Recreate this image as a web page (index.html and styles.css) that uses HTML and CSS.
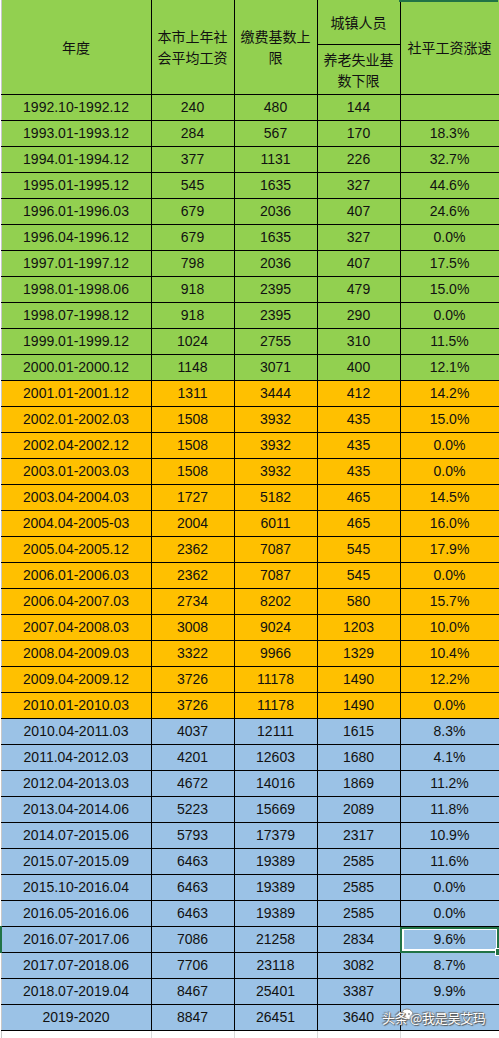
FILE: index.html
```html
<!DOCTYPE html>
<html lang="zh">
<head>
    <meta charset="UTF-8">
    <meta name="viewport" content="width=device-width, initial-scale=1.0">
    <title>社平工资与缴费基数</title>
    <link rel="stylesheet" href="styles.css">
</head>
<body>
    <div class="sheet">
        <div class="col-mark"></div>
        <table class="grid">
            <colgroup>
                <col class="c1"><col class="c2"><col class="c3"><col class="c4"><col class="c5">
            </colgroup>
            <thead>
                <tr class="h1">
                    <th rowspan="2">年度</th>
                    <th rowspan="2">本市上年社<br>会平均工资</th>
                    <th rowspan="2">缴费基数上<br>限</th>
                    <th>城镇人员</th>
                    <th rowspan="2">社平工资涨速</th>
                </tr>
                <tr class="h2">
                    <th>养老失业基<br>数下限</th>
                </tr>
            </thead>
            <tbody>
                <tr class="g"><td>1992.10-1992.12</td><td>240</td><td>480</td><td>144</td><td></td></tr>
                <tr class="g"><td>1993.01-1993.12</td><td>284</td><td>567</td><td>170</td><td>18.3%</td></tr>
                <tr class="g"><td>1994.01-1994.12</td><td>377</td><td>1131</td><td>226</td><td>32.7%</td></tr>
                <tr class="g"><td>1995.01-1995.12</td><td>545</td><td>1635</td><td>327</td><td>44.6%</td></tr>
                <tr class="g"><td>1996.01-1996.03</td><td>679</td><td>2036</td><td>407</td><td>24.6%</td></tr>
                <tr class="g"><td>1996.04-1996.12</td><td>679</td><td>1635</td><td>327</td><td>0.0%</td></tr>
                <tr class="g"><td>1997.01-1997.12</td><td>798</td><td>2036</td><td>407</td><td>17.5%</td></tr>
                <tr class="g"><td>1998.01-1998.06</td><td>918</td><td>2395</td><td>479</td><td>15.0%</td></tr>
                <tr class="g"><td>1998.07-1998.12</td><td>918</td><td>2395</td><td>290</td><td>0.0%</td></tr>
                <tr class="g"><td>1999.01-1999.12</td><td>1024</td><td>2755</td><td>310</td><td>11.5%</td></tr>
                <tr class="g"><td>2000.01-2000.12</td><td>1148</td><td>3071</td><td>400</td><td>12.1%</td></tr>
                <tr class="o"><td>2001.01-2001.12</td><td>1311</td><td>3444</td><td>412</td><td>14.2%</td></tr>
                <tr class="o"><td>2002.01-2002.03</td><td>1508</td><td>3932</td><td>435</td><td>15.0%</td></tr>
                <tr class="o"><td>2002.04-2002.12</td><td>1508</td><td>3932</td><td>435</td><td>0.0%</td></tr>
                <tr class="o"><td>2003.01-2003.03</td><td>1508</td><td>3932</td><td>435</td><td>0.0%</td></tr>
                <tr class="o"><td>2003.04-2004.03</td><td>1727</td><td>5182</td><td>465</td><td>14.5%</td></tr>
                <tr class="o"><td>2004.04-2005-03</td><td>2004</td><td>6011</td><td>465</td><td>16.0%</td></tr>
                <tr class="o"><td>2005.04-2005.12</td><td>2362</td><td>7087</td><td>545</td><td>17.9%</td></tr>
                <tr class="o"><td>2006.01-2006.03</td><td>2362</td><td>7087</td><td>545</td><td>0.0%</td></tr>
                <tr class="o"><td>2006.04-2007.03</td><td>2734</td><td>8202</td><td>580</td><td>15.7%</td></tr>
                <tr class="o"><td>2007.04-2008.03</td><td>3008</td><td>9024</td><td>1203</td><td>10.0%</td></tr>
                <tr class="o"><td>2008.04-2009.03</td><td>3322</td><td>9966</td><td>1329</td><td>10.4%</td></tr>
                <tr class="o"><td>2009.04-2009.12</td><td>3726</td><td>11178</td><td>1490</td><td>12.2%</td></tr>
                <tr class="o"><td>2010.01-2010.03</td><td>3726</td><td>11178</td><td>1490</td><td>0.0%</td></tr>
                <tr class="b"><td>2010.04-2011.03</td><td>4037</td><td>12111</td><td>1615</td><td>8.3%</td></tr>
                <tr class="b"><td>2011.04-2012.03</td><td>4201</td><td>12603</td><td>1680</td><td>4.1%</td></tr>
                <tr class="b"><td>2012.04-2013.03</td><td>4672</td><td>14016</td><td>1869</td><td>11.2%</td></tr>
                <tr class="b"><td>2013.04-2014.06</td><td>5223</td><td>15669</td><td>2089</td><td>11.8%</td></tr>
                <tr class="b"><td>2014.07-2015.06</td><td>5793</td><td>17379</td><td>2317</td><td>10.9%</td></tr>
                <tr class="b"><td>2015.07-2015.09</td><td>6463</td><td>19389</td><td>2585</td><td>11.6%</td></tr>
                <tr class="b"><td>2015.10-2016.04</td><td>6463</td><td>19389</td><td>2585</td><td>0.0%</td></tr>
                <tr class="b"><td>2016.05-2016.06</td><td>6463</td><td>19389</td><td>2585</td><td>0.0%</td></tr>
                <tr class="b active"><td>2016.07-2017.06</td><td>7086</td><td>21258</td><td>2834</td><td class="sel">9.6%<span class="handle"></span></td></tr>
                <tr class="b"><td>2017.07-2018.06</td><td>7706</td><td>23118</td><td>3082</td><td>8.7%</td></tr>
                <tr class="b"><td>2018.07-2019.04</td><td>8467</td><td>25401</td><td>3387</td><td>9.9%</td></tr>
                <tr class="b"><td>2019-2020</td><td>8847</td><td>26451</td><td>3640</td><td></td></tr>
                <tr class="blank"><td></td><td></td><td></td><td></td><td></td></tr>
            </tbody>
        </table>
        <div class="watermark">
            <svg class="wm-icon" width="14" height="13" viewBox="0 0 14 13">
                <ellipse cx="7" cy="6.5" rx="6" ry="5.5" fill="#ffffff" stroke="#8a8a8a" stroke-width="1"/>
                <circle cx="5" cy="6" r="0.9" fill="#8a8a8a"/>
                <circle cx="9" cy="6" r="0.9" fill="#8a8a8a"/>
            </svg>
            <span class="wm-text">头条 @我是吴艾玛</span>
        </div>
    </div>
</body>
</html>
```

FILE: styles.css
```css
body {
    margin: 0;
    padding: 0;
    background: #ffffff;
    font-family: "Liberation Sans", "Noto Sans CJK SC", sans-serif;
    color: #111;
    overflow: hidden;
}

.sheet {
    position: relative;
    width: 499px;
    height: 1038px;
    overflow: hidden;
}

.grid {
    border-collapse: collapse;
    table-layout: fixed;
    width: 498px;
    font-size: 14px;
}

.c1 { width: 150px; }
.c2 { width: 83px; }
.c3 { width: 83px; }
.c4 { width: 83px; }
.c5 { width: 99px; }

.grid th,
.grid td {
    border: 1px solid #000;
    padding: 0;
    text-align: center;
    vertical-align: middle;
    white-space: nowrap;
}

.grid th {
    background: #92d050;
    font-weight: normal;
    line-height: 21px;
    font-family: "Noto Sans CJK SC", sans-serif;
    font-size: 14px;
    border-top: none;
}

.grid tr > :first-child {
    border-left: 1px solid #c8c8c8;
}

.grid tr > :last-child {
    border-right: 1px solid #c8c8c8;
}

.h1 th { height: 44px; }
.h2 th { height: 49px; border-top: 1px solid #000; }

.grid tbody td {
    height: 25px;
    line-height: 25px;
}

.g td { background: #92d050; }
.o td { background: #ffc000; }
.b td { background: #9bc2e6; }

.blank td {
    background: #ffffff;
    border-top: none;
    border-bottom: none;
    border-left: 1px solid #dadada;
    border-right: 1px solid #dadada;
}

.active td:first-child {
    border-left: 2px solid #217346;
}

.sel {
    position: relative;
    outline: 2px solid #217346;
    outline-offset: -2px;
    box-shadow: inset 0 0 0 3px #ffffff;
}

.handle {
    position: absolute;
    right: -4px;
    bottom: -4px;
    width: 6px;
    height: 6px;
    background: #217346;
    border: 1px solid #ffffff;
}

.col-mark {
    position: absolute;
    left: 399px;
    top: 0;
    width: 99px;
    height: 2px;
    background: #217346;
    z-index: 2;
}

.watermark {
    position: absolute;
    left: 382px;
    top: 1009px;
    white-space: nowrap;
}

.wm-icon {
    position: absolute;
    left: 18px;
    top: -1px;
}

.wm-text {
    position: relative;
    font-family: "Noto Sans CJK SC", sans-serif;
    font-size: 13px;
    line-height: 18px;
    color: #ffffff;
    letter-spacing: -0.3px;
    text-shadow: 0 0 1px #555, 1px 1px 1px #555, -1px -1px 1px #777;
}
```
